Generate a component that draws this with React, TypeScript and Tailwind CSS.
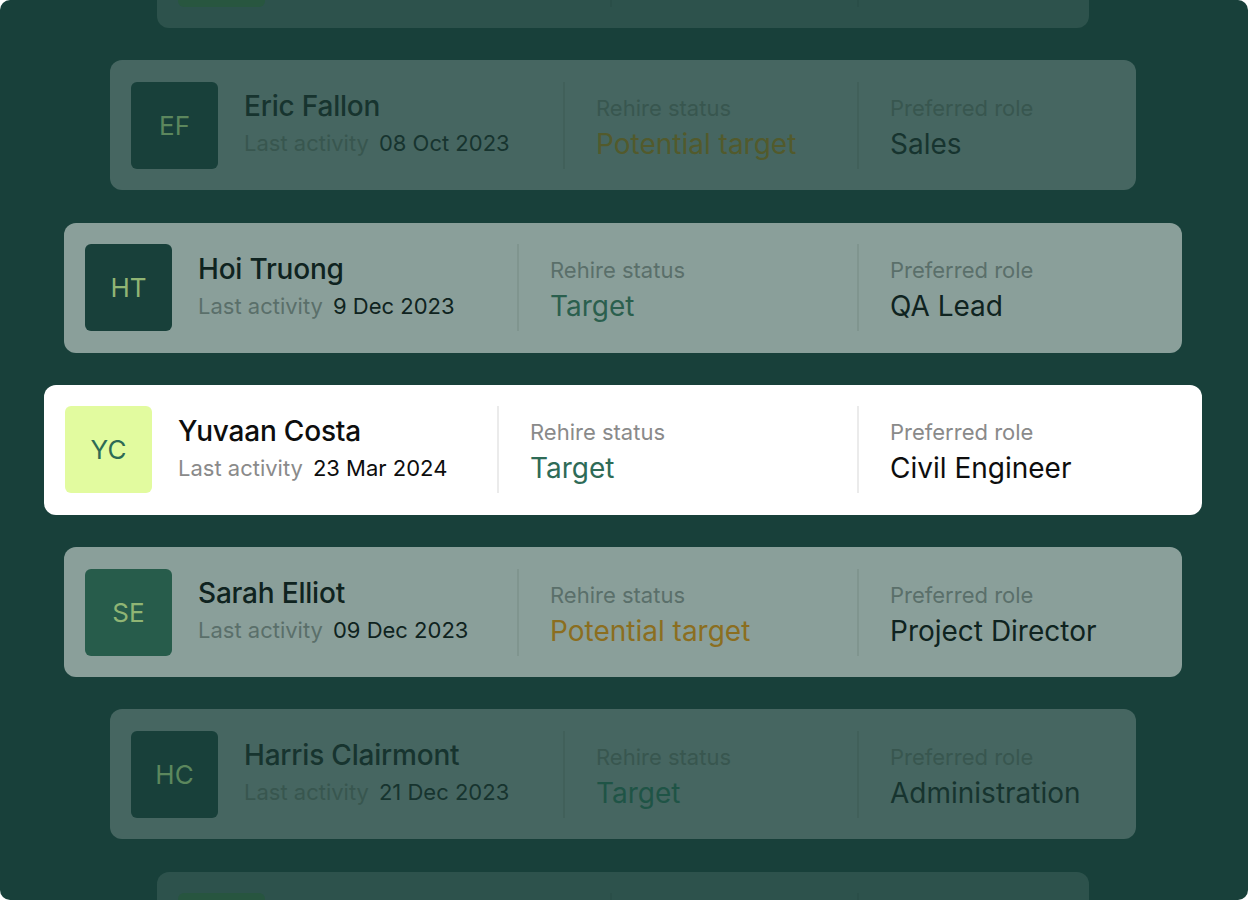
import React from 'react'

type Tone = 'faint' | 'far' | 'mid' | 'front'
type Status = 'Target' | 'Potential target'

type Person = {
  initials: string
  name: string
  date: string
  status: Status
  role: string
  tone: Tone
  width: string
  avatar: string
}

// colours per depth: the cards fade into the green the further they sit from the middle one
const TONES: Record<Tone, {
  card: string
  name: string
  muted: string
  divider: string
  target: string
  potential: string
}> = {
  faint: {
    card: 'bg-[#2d524c]',
    name: 'text-[#1d3c37]',
    muted: 'text-[#36564f]',
    divider: 'border-[#2a4e48]',
    target: 'text-[#1f4a3f]',
    potential: 'text-[#3f4e30]',
  },
  far: {
    card: 'bg-[#466661]',
    name: 'text-[#17342f]',
    muted: 'text-[#38564f]',
    divider: 'border-[#41605a]',
    target: 'text-[#1f5446]',
    potential: 'text-[#525a2c]',
  },
  mid: {
    card: 'bg-[#8a9f9a]',
    name: 'text-[#0f2320]',
    muted: 'text-[#5a6f6a]',
    divider: 'border-[#80958f]',
    target: 'text-[#2b5f4e]',
    potential: 'text-[#8b6e20]',
  },
  front: {
    card: 'bg-white',
    name: 'text-[#0d0d0d]',
    muted: 'text-[#8a8a8a]',
    divider: 'border-[#ebebeb]',
    target: 'text-[#2e6b57]',
    potential: 'text-[#b08a22]',
  },
}

const PEOPLE: Person[] = [
  { initials: 'MB', name: 'Maya Brennan', date: '14 Sep 2023', status: 'Target', role: 'Site Manager', tone: 'faint', width: 'w-[932px]', avatar: 'bg-[#28563f] text-[#4f7d55]' },
  { initials: 'EF', name: 'Eric Fallon', date: '08 Oct 2023', status: 'Potential target', role: 'Sales', tone: 'far', width: 'w-[1026px]', avatar: 'bg-[#18403a] text-[#5c875d]' },
  { initials: 'HT', name: 'Hoi Truong', date: '9 Dec 2023', status: 'Target', role: 'QA Lead', tone: 'mid', width: 'w-[1118px]', avatar: 'bg-[#18403a] text-[#90b574]' },
  { initials: 'YC', name: 'Yuvaan Costa', date: '23 Mar 2024', status: 'Target', role: 'Civil Engineer', tone: 'front', width: 'w-[1158px]', avatar: 'bg-[#e2fb9f] text-[#2d6a55]' },
  { initials: 'SE', name: 'Sarah Elliot', date: '09 Dec 2023', status: 'Potential target', role: 'Project Director', tone: 'mid', width: 'w-[1118px]', avatar: 'bg-[#275c4b] text-[#90b574]' },
  { initials: 'HC', name: 'Harris Clairmont', date: '21 Dec 2023', status: 'Target', role: 'Administration', tone: 'far', width: 'w-[1026px]', avatar: 'bg-[#18403a] text-[#5c875d]' },
  { initials: 'LO', name: 'Liam Ortega', date: '02 Jan 2024', status: 'Target', role: 'Estimator', tone: 'faint', width: 'w-[932px]', avatar: 'bg-[#27553f] text-[#4f7d55]' },
]

function PersonCard({ p }: { p: Person }) {
  const t = TONES[p.tone]
  return (
    <div className={`${p.width} ${t.card} h-[130px] shrink-0 rounded-[12px] px-[21px] flex items-center`}>
      <div className="w-[432px] shrink-0 flex items-center gap-[26px]">
        <div className={`${p.avatar} w-[87px] h-[87px] rounded-[6px] flex items-center justify-center text-[26px]`}>
          {p.initials}
        </div>
        <div className="flex flex-col gap-[5px] pb-[5px]">
          <div className={`${t.name} text-[28px] leading-[36px] font-medium tracking-[-0.2px]`}>{p.name}</div>
          <div className="flex items-baseline gap-[10px] text-[22px] leading-[28px]">
            <span className={t.muted}>Last activity</span>
            <span className={t.name}>{p.date}</span>
          </div>
        </div>
      </div>

      <div className={`flex-[1_1_69px] min-w-0 h-[87px] border-l-2 ${t.divider} pl-[31px] pt-[5px] flex flex-col justify-center gap-[4px]`}>
        <div className={`${t.muted} text-[22px] leading-[28px]`}>Rehire status</div>
        <div className={`${p.status === 'Target' ? t.target : t.potential} text-[28px] leading-[36px]`}>{p.status}</div>
      </div>

      <div className={`flex-[1_1_0px] min-w-0 h-[87px] border-l-2 ${t.divider} pl-[31px] pt-[5px] flex flex-col justify-center gap-[4px]`}>
        <div className={`${t.muted} text-[22px] leading-[28px]`}>Preferred role</div>
        <div className={`${t.name} text-[28px] leading-[36px]`}>{p.role}</div>
      </div>
    </div>
  )
}

export default function App() {
  return (
    <div className="w-[1248px] h-[900px] bg-white font-['Inter',sans-serif]">
      <div className="w-full h-full bg-[#18403a] rounded-[10px] overflow-hidden pr-[2px]">
        <div className="flex flex-col items-center gap-[32.25px] mt-[-102px]">
          {PEOPLE.map((p) => (
            <PersonCard key={p.initials} p={p} />
          ))}
        </div>
      </div>
    </div>
  )
}
